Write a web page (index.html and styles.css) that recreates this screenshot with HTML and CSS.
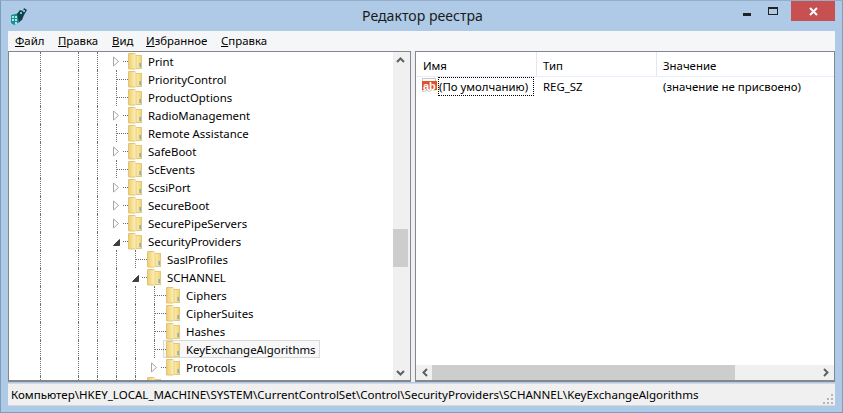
FILE: index.html
```html
<!DOCTYPE html>
<html lang="ru">
<head>
<meta charset="utf-8">
<title>Редактор реестра</title>
<link rel="stylesheet" href="styles.css">
</head>
<body>
<svg class="defs" width="0" height="0" aria-hidden="true">
  <defs>
    <linearGradient id="fy" x1="0" y1="0" x2="1" y2="0">
      <stop offset="0" stop-color="#fdf0b4"/><stop offset=".5" stop-color="#f9e08e"/><stop offset="1" stop-color="#f3d06c"/>
    </linearGradient>
    <linearGradient id="fl" x1="0" y1="0" x2="1" y2="0">
      <stop offset="0" stop-color="#efcd72"/><stop offset=".6" stop-color="#f8e297"/><stop offset="1" stop-color="#fdf0b8"/>
    </linearGradient>
    <symbol id="folder" viewBox="0 0 16 18">
      <path d="M.5 1.500h6l1 .5v15H.5z" fill="url(#fl)" stroke="#e0c478" stroke-width="1"/>
      <path d="M7 2l1 1v14H7z" fill="#fff6cf"/>
      <rect x="8" y="3.500" width="5.500" height="13" fill="url(#fy)" stroke="#e4c878" stroke-width="1"/>
      <rect x="11.500" y="11" width="1.300" height="4" fill="#5fa8dc"/>
    </symbol>
    <symbol id="closed" viewBox="0 0 9 11"><path d="M1.500 1v9l5-4.500z" fill="#fff" stroke="#a6a6a6"/></symbol>
    <symbol id="open" viewBox="0 0 9 9"><path d="M7.500 1.500v6h-6z" fill="#404040" stroke="#404040"/></symbol>
  </defs>
</svg>
<div class="window">
  <header class="titlebar">
    <div class="title-left">
      <svg class="app-icon" viewBox="0 0 17 17" width="17" height="17"><path d="M1 7l8-2 1 9-6 3-3-2z" fill="#1c8f95"/><path d="M2 8h2v2H2zm3 0h2v2H5zm-3 3h2v2H2zm3 0h2v2H5zm0 3h2v2H5z" fill="#a8ecea"/><path d="M7 6l3-4 3 1 1-3 3 2-3 5-2 5-3 2z" fill="#173f4a"/><path d="M10 4h2v2h-2zm3-2h2v2h-2z" fill="#5fd3d0"/></svg>
    </div>
    <h1 class="title">Редактор реестра</h1>
    <div class="controls">
      <span class="ctl ctl-min"><i></i></span>
      <span class="ctl ctl-max"><i></i></span>
      <span class="ctl ctl-close"><svg viewBox="0 0 9 9" width="9" height="9"><path d="M1 1l7 7M8 1L1 8" stroke="#fff" stroke-width="2"/></svg></span>
    </div>
  </header>
  <nav class="menu">
    <span class="menu-item"><u>Ф</u>айл</span>
    <span class="menu-item"><u>П</u>равка</span>
    <span class="menu-item"><u>В</u>ид</span>
    <span class="menu-item"><u>И</u>збранное</span>
    <span class="menu-item"><u>С</u>правка</span>
  </nav>
  <main class="panes">
    <section class="pane tree-pane">
      <div class="tree">
        <div class="row"><b class="c"></b><b class="c g"></b><b class="c"></b><b class="c g"></b><b class="c g"></b><b class="c e"><svg class="arrow"><use href="#closed"/></svg></b><svg class="fld"><use href="#folder"/></svg><span class="lbl">Print</span></div>
        <div class="row"><b class="c"></b><b class="c g"></b><b class="c"></b><b class="c g"></b><b class="c g"></b><b class="c g e"></b><svg class="fld"><use href="#folder"/></svg><span class="lbl">PriorityControl</span></div>
        <div class="row"><b class="c"></b><b class="c g"></b><b class="c"></b><b class="c g"></b><b class="c g"></b><b class="c g e"></b><svg class="fld"><use href="#folder"/></svg><span class="lbl">ProductOptions</span></div>
        <div class="row"><b class="c"></b><b class="c g"></b><b class="c"></b><b class="c g"></b><b class="c g"></b><b class="c e"><svg class="arrow"><use href="#closed"/></svg></b><svg class="fld"><use href="#folder"/></svg><span class="lbl">RadioManagement</span></div>
        <div class="row"><b class="c"></b><b class="c g"></b><b class="c"></b><b class="c g"></b><b class="c g"></b><b class="c g e"></b><svg class="fld"><use href="#folder"/></svg><span class="lbl">Remote Assistance</span></div>
        <div class="row"><b class="c"></b><b class="c g"></b><b class="c"></b><b class="c g"></b><b class="c g"></b><b class="c e"><svg class="arrow"><use href="#closed"/></svg></b><svg class="fld"><use href="#folder"/></svg><span class="lbl">SafeBoot</span></div>
        <div class="row"><b class="c"></b><b class="c g"></b><b class="c"></b><b class="c g"></b><b class="c g"></b><b class="c g e"></b><svg class="fld"><use href="#folder"/></svg><span class="lbl">ScEvents</span></div>
        <div class="row"><b class="c"></b><b class="c g"></b><b class="c"></b><b class="c g"></b><b class="c g"></b><b class="c e"><svg class="arrow"><use href="#closed"/></svg></b><svg class="fld"><use href="#folder"/></svg><span class="lbl">ScsiPort</span></div>
        <div class="row"><b class="c"></b><b class="c g"></b><b class="c"></b><b class="c g"></b><b class="c g"></b><b class="c e"><svg class="arrow"><use href="#closed"/></svg></b><svg class="fld"><use href="#folder"/></svg><span class="lbl">SecureBoot</span></div>
        <div class="row"><b class="c"></b><b class="c g"></b><b class="c"></b><b class="c g"></b><b class="c g"></b><b class="c e"><svg class="arrow"><use href="#closed"/></svg></b><svg class="fld"><use href="#folder"/></svg><span class="lbl">SecurePipeServers</span></div>
        <div class="row"><b class="c"></b><b class="c g"></b><b class="c"></b><b class="c g"></b><b class="c g"></b><b class="c e"><svg class="arrow open"><use href="#open"/></svg></b><svg class="fld"><use href="#folder"/></svg><span class="lbl">SecurityProviders</span></div>
        <div class="row"><b class="c"></b><b class="c g"></b><b class="c"></b><b class="c g"></b><b class="c g"></b><b class="c g"></b><b class="c g e"></b><svg class="fld"><use href="#folder"/></svg><span class="lbl">SaslProfiles</span></div>
        <div class="row"><b class="c"></b><b class="c g"></b><b class="c"></b><b class="c g"></b><b class="c g"></b><b class="c g"></b><b class="c e"><svg class="arrow open"><use href="#open"/></svg></b><svg class="fld"><use href="#folder"/></svg><span class="lbl">SCHANNEL</span></div>
        <div class="row"><b class="c"></b><b class="c g"></b><b class="c"></b><b class="c g"></b><b class="c g"></b><b class="c g"></b><b class="c g"></b><b class="c g e"></b><svg class="fld"><use href="#folder"/></svg><span class="lbl">Ciphers</span></div>
        <div class="row"><b class="c"></b><b class="c g"></b><b class="c"></b><b class="c g"></b><b class="c g"></b><b class="c g"></b><b class="c g"></b><b class="c g e"></b><svg class="fld"><use href="#folder"/></svg><span class="lbl">CipherSuites</span></div>
        <div class="row"><b class="c"></b><b class="c g"></b><b class="c"></b><b class="c g"></b><b class="c g"></b><b class="c g"></b><b class="c g"></b><b class="c g e"></b><svg class="fld"><use href="#folder"/></svg><span class="lbl">Hashes</span></div>
        <div class="row"><b class="c"></b><b class="c g"></b><b class="c"></b><b class="c g"></b><b class="c g"></b><b class="c g"></b><b class="c g"></b><b class="c g e"></b><span class="selected"><svg class="fld"><use href="#folder"/></svg><span class="lbl">KeyExchangeAlgorithms</span></span></div>
        <div class="row"><b class="c"></b><b class="c g"></b><b class="c"></b><b class="c g"></b><b class="c g"></b><b class="c g"></b><b class="c g"></b><b class="c e"><svg class="arrow"><use href="#closed"/></svg></b><svg class="fld"><use href="#folder"/></svg><span class="lbl">Protocols</span></div>
        <div class="row"><b class="c"></b><b class="c g"></b><b class="c"></b><b class="c g"></b><b class="c g"></b><b class="c g"></b><b class="c g e"></b><svg class="fld"><use href="#folder"/></svg></div>
      </div>
      <div class="vscroll">
        <span class="sb-btn"><svg viewBox="0 0 9 6" width="9" height="6"><path d="M1 5l3.500-3.500L8 5" fill="none" stroke="#606060" stroke-width="2"/></svg></span>
        <div class="vtrack"><div class="vthumb"></div></div>
        <span class="sb-btn"><svg viewBox="0 0 9 6" width="9" height="6"><path d="M1 1l3.500 3.500L8 1" fill="none" stroke="#606060" stroke-width="2"/></svg></span>
      </div>
    </section>
    <section class="pane list-pane">
      <div class="list-head">
        <span class="col col-name">Имя</span>
        <span class="col col-type">Тип</span>
        <span class="col col-value">Значение</span>
      </div>
      <div class="list-row">
        <span class="col-name cell-name">
          <svg class="ab" viewBox="0 0 17 17" width="17" height="17"><path d="M1.500 1.500h13v12l-3-1-3 2-3-1-4 1z" fill="#fff" stroke="#c8c8c8"/><rect x="1" y="4" width="15" height="9" fill="#e0522a"/></svg>
          <span class="ab-text">ab</span>
          <span class="focus">(По умолчанию)</span>
        </span>
        <span class="col-type">REG_SZ</span>
        <span class="col-value">(значение не присвоено)</span>
      </div>
      <div class="list-fill"></div>
      <div class="hscroll">
        <span class="sb-btn"><svg viewBox="0 0 6 9" width="6" height="9"><path d="M5 1L1.500 4.500 5 8" fill="none" stroke="#606060" stroke-width="2"/></svg></span>
        <div class="htrack"><div class="hthumb"></div></div>
        <span class="sb-btn"><svg viewBox="0 0 6 9" width="6" height="9"><path d="M1 1l3.500 3.500L1 8" fill="none" stroke="#606060" stroke-width="2"/></svg></span>
      </div>
    </section>
  </main>
  <footer class="status">
    <span>Компьютер\HKEY_LOCAL_MACHINE\SYSTEM\CurrentControlSet\Control\SecurityProviders\SCHANNEL\KeyExchangeAlgorithms</span>
    <svg class="grip" viewBox="0 0 11 11" width="11" height="11"><path d="M8 0h2v2H8zM4 4h2v2H4zm4 0h2v2H8zM0 8h2v2H0zm4 0h2v2H4zm4 0h2v2H8z" fill="#b5b5b5"/></svg>
  </footer>
</div>
</body>
</html>
```
FILE: styles.css
```css
* { box-sizing: border-box; }
html, body { margin: 0; padding: 0; }
body { font-family: "Noto Sans", "Liberation Sans", sans-serif; font-size: 11.4px; color: #000; background: #aecae6; overflow: hidden; }
.defs { display: block; height: 0; }
.window { width: 843px; height: 413px; display: flex; flex-direction: column; background: #aecae6; border: 1px solid #7f9db9; border-top-color: #93aec9; padding: 0 7px 7px 7px; overflow: hidden; }
.titlebar { height: 30px; flex: none; display: grid; grid-template-columns: 1fr auto 1fr; margin: 0 -7px; padding: 0 7px 0 9px; }
.title-left { display: flex; align-items: flex-start; padding-top: 7px; }
.title { margin: 0; font-size: 14.1px; font-weight: 400; line-height: 30px; color: #1a1a1a; }
.controls { display: flex; justify-content: flex-end; align-items: flex-start; }
.ctl { display: flex; align-items: center; justify-content: center; height: 20px; }
.ctl-min { width: 26px; }
.ctl-min i { display: block; width: 8px; height: 3px; background: #222; margin-top: 7px; }
.ctl-max { width: 26px; margin-right: 5px; }
.ctl-max i { display: block; width: 10px; height: 8px; border: 1px solid #222; border-top-width: 2px; }
.ctl-close { width: 44px; background: #c75050; }
.menu { height: 20px; flex: none; display: flex; align-items: center; background: #f5f6f7; padding-left: 7px; line-height: 20px; }
.menu-item:nth-child(1) { width: 43px; }
.menu-item:nth-child(2) { width: 54px; }
.menu-item:nth-child(3) { width: 34px; }
.menu-item:nth-child(4) { width: 75px; }
.panes { flex: none; height: 331px; display: flex; gap: 4px; background: #f0f0f0; }
.pane { background: #fff; border: 1px solid #828790; border-width: 1px 1px 2px 1px; }
.tree-pane { width: 403px; flex: none; display: flex; overflow: hidden; }
.tree { flex: 1; padding-left: 5px; min-width: 0; overflow: hidden; height: 328px; }
.row { height: 18px; display: flex; align-items: stretch; white-space: nowrap; }
.c { flex: none; width: 19px; position: relative; display: block; }
.g::before { content: ""; position: absolute; left: 7px; top: 0; bottom: 0; border-left: 1px dotted #6e6e6e; }
.e::after { content: ""; position: absolute; left: 8px; right: 0; top: 9px; border-top: 1px dotted #6e6e6e; }
.arrow { position: absolute; left: 3px; top: 4px; width: 9px; height: 11px; }
.arrow.open { width: 9px; height: 9px; top: 6px; }
.e:has(.arrow)::after { left: 14px; }
.fld { flex: none; width: 16px; height: 18px; display: block; }
.lbl { padding-left: 4px; line-height: 20px; height: 18px; }
.selected { display: flex; align-items: flex-start; height: 18px; margin-left: -3px; padding: 0 3px 0 2px; background: #f7f7f7; border: 1px solid #d9d9d9; }
.selected .fld { margin-top: -1px; }
.selected .lbl { margin-top: -1px; }
.vscroll { width: 17px; flex: none; background: #f0f0f0; display: flex; flex-direction: column; align-items: flex-start; }
.sb-btn { flex: none; width: 15px; height: 15px; display: flex; align-items: center; justify-content: center; }
.vtrack { flex: 1; width: 15px; padding-top: 162px; }
.vthumb { height: 38px; background: #cdcdcd; }
.list-pane { flex: 1; min-width: 0; display: flex; flex-direction: column; }
.list-head { height: 25px; flex: none; display: flex; border-bottom: 1px solid #e5eefa; line-height: 27px; }
.col { display: block; height: 100%; border-right: 1px solid #e5e5f0; }
.col-name { width: 121px; flex: none; padding-left: 7px; }
.col-type { width: 120px; flex: none; padding-left: 6px; }
.col-value { flex: 1; padding-left: 6px; border-right: 0; }
.list-row { height: 20px; flex: none; display: flex; align-items: flex-start; line-height: 20px; position: relative; }
.cell-name { display: flex; align-items: flex-start; padding-left: 5px; position: relative; }
.ab { flex: none; }
.ab-text { position: absolute; left: 7px; top: 3px; color: #fff; font: 700 11px/13px "Liberation Sans", sans-serif; }
.focus { border: 1px dotted #000; height: 19px; line-height: 17px; padding: 0 5px 0 0; white-space: nowrap; }
.list-fill { flex: 1; }
.hscroll { height: 15px; flex: none; background: #f0f0f0; display: flex; align-items: center; padding: 0 1px; }
.htrack { flex: 1; height: 15px; }
.hthumb { height: 15px; width: 303px; background: #cdcdcd; }
.status { flex: none; height: 23px; margin-top: 1px; background: #f0f0f0; border: 1px solid #d4d9df; border-width: 1px 0 1px 0; display: flex; align-items: center; justify-content: space-between; padding: 0 1px 0 3px; white-space: nowrap; font-size: 11.55px; }
.grip { align-self: flex-end; }
```
